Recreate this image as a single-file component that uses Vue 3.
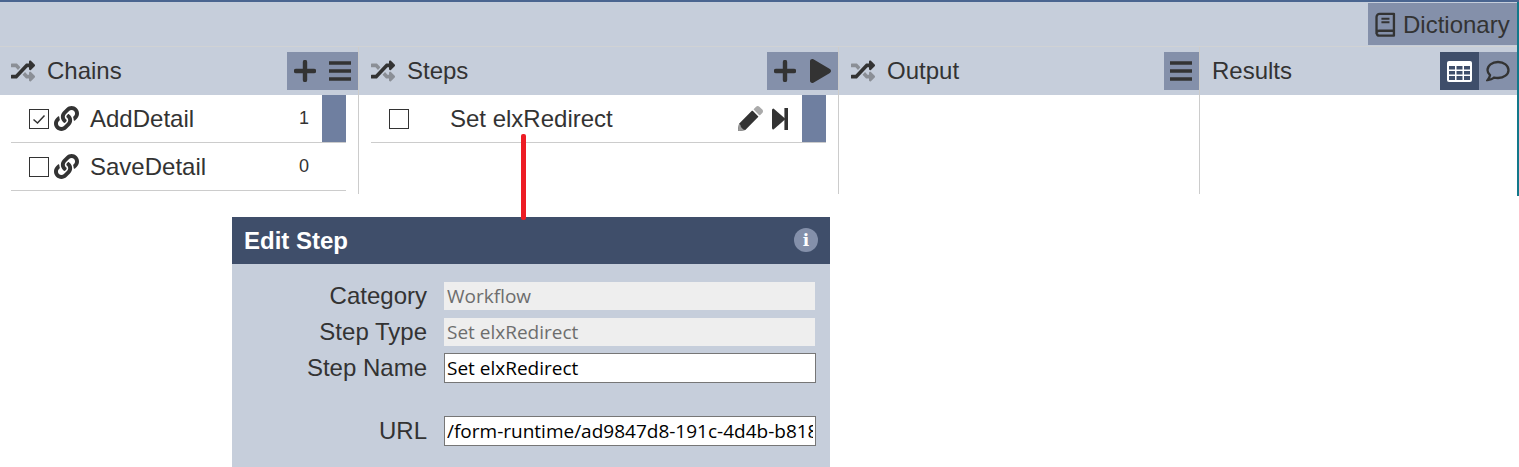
<script setup>
const shuffleGrey = 'M504.971 359.029c9.373 9.373 9.373 24.569 0 33.941l-80 79.984c-15.010 15.010-40.971 4.490-40.971-16.971V416h-58.785a12.004 12.004 0 0 1-8.773-3.812l-70.556-75.596 53.333-57.143L352 336h32v-39.981c0-21.438 25.943-31.998 40.971-16.971l80 79.981zM12 176h84l52.781 56.551 53.333-57.143-70.556-75.596A11.999 11.999 0 0 0 122.785 96H12c-6.627 0-12 5.373-12 12v56c0 6.627 5.373 12 12 12z'
const shuffleDark = 'M384 176v39.984c0 21.460 25.961 31.980 40.971 16.971l80-79.984c9.373-9.373 9.373-24.569 0-33.941l-80-79.981C409.943 24.021 384 34.582 384 56.019V96h-58.785a12.004 12.004 0 0 0-8.773 3.812L96 336H12c-6.627 0-12 5.373-12 12v56c0 6.627 5.373 12 12 12h110.785c3.326 0 6.503-1.381 8.773-3.812L352 176h32z'
const linkPath = 'M326.612 185.391c59.747 59.809 58.927 155.698.360 214.590-.110.120-.240.250-.360.370l-67.200 67.200c-59.270 59.270-155.699 59.262-214.960 0-59.270-59.260-59.270-155.700 0-214.960l37.106-37.106c9.840-9.840 26.786-3.300 27.294 10.606.648 17.722 3.826 35.527 9.690 52.721 1.986 5.822.567 12.262-3.783 16.612l-13.087 13.087c-28.026 28.026-28.905 73.660-1.155 101.960 28.024 28.579 74.086 28.749 102.325.510l67.200-67.190c28.191-28.191 28.073-73.757 0-101.830-3.701-3.694-7.429-6.564-10.341-8.569a16.037 16.037 0 0 1-6.947-12.606c-.396-10.567 3.348-21.456 11.698-29.806l21.054-21.055c5.521-5.521 14.182-6.199 20.584-1.731a152.482 152.482 0 0 1 20.522 17.197zM467.547 44.449c-59.261-59.262-155.690-59.270-214.960 0l-67.200 67.200c-.120.120-.250.250-.360.370-58.566 58.892-59.387 154.781.360 214.590a152.454 152.454 0 0 0 20.521 17.196c6.402 4.468 15.064 3.789 20.584-1.731l21.054-21.055c8.350-8.350 12.094-19.239 11.698-29.806a16.037 16.037 0 0 0-6.947-12.606c-2.912-2.005-6.640-4.875-10.341-8.569-28.073-28.073-28.191-73.639 0-101.830l67.200-67.190c28.239-28.239 74.300-28.069 102.325.510 27.750 28.300 26.872 73.934-1.155 101.960l-13.087 13.087c-4.350 4.350-5.769 10.790-3.783 16.612 5.864 17.194 9.042 34.999 9.690 52.721.509 13.906 17.454 20.446 27.294 10.606l37.106-37.106c59.271-59.259 59.271-155.699.001-214.959z'
const chains = [
  { name: 'AddDetail', count: 1, checked: true },
  { name: 'SaveDetail', count: 0, checked: false },
]
const fields = [
  { label: 'Category', value: 'Workflow', disabled: true },
  { label: 'Step Type', value: 'Set elxRedirect', disabled: true },
  { label: 'Step Name', value: 'Set elxRedirect', disabled: false },
  { label: 'URL', value: '/form-runtime/ad9847d8-191c-4d4b-b818-4f2a6c0e1d37', disabled: false, gap: true },
]
</script>

<template>
  <div class="page">
    <div class="edge"></div>
    <div class="toolbar">
      <button class="dict">
        <svg viewBox="0 0 24 28" width="22" height="25">
          <path d="M6 2h16v19H5.500a3 3 0 0 0-3 3V5.500A3.500 3.500 0 0 1 6 2z" fill="none" stroke="#333" stroke-width="2.600" stroke-linejoin="round"/>
          <path d="M3 24a2.500 2.500 0 0 0 2.500 2.500H22V21" fill="none" stroke="#333" stroke-width="2.600" stroke-linejoin="round"/>
          <path d="M8 7.500h9M8 11.500h9" stroke="#333" stroke-width="2.400"/>
        </svg>
        <span>Dictionary</span>
      </button>
    </div>

    <div class="panes">
      <section class="pane chains">
        <header class="head">
          <svg viewBox="0 0 512 512" width="24" height="24"><path :d="shuffleGrey" fill="#8b8f96"/><path :d="shuffleDark" fill="#333"/></svg>
          <h2>Chains</h2>
          <div class="btns">
            <span class="ico"><svg viewBox="0 0 22 22" width="22" height="22"><path d="M11 2v18M2 11h18" stroke="#333" stroke-width="4.400" stroke-linecap="round"/></svg></span>
            <span class="ico"><svg viewBox="0 0 22 22" width="22" height="22"><path d="M0 3h22M0 11h22M0 19h22" stroke="#333" stroke-width="3.400"/></svg></span>
          </div>
        </header>
        <div class="list">
          <div v-for="c in chains" :key="c.name" class="row">
            <span class="check"><svg v-if="c.checked" viewBox="0 0 18 18" width="18" height="18"><path d="M3.500 9.500l4 3.500 7-7.500" fill="none" stroke="#333" stroke-width="1.500"/></svg></span>
            <svg class="link" viewBox="0 0 512 512" width="25" height="25"><path :d="linkPath" fill="#333"/></svg>
            <span class="name">{{ c.name }}</span>
            <span class="count" :class="{ tight: c.checked }">{{ c.count }}</span>
            <span v-if="c.checked" class="handle"></span>
          </div>
        </div>
      </section>

      <section class="pane steps">
        <header class="head">
          <svg viewBox="0 0 512 512" width="24" height="24"><path :d="shuffleGrey" fill="#8b8f96"/><path :d="shuffleDark" fill="#333"/></svg>
          <h2>Steps</h2>
          <div class="btns">
            <span class="ico"><svg viewBox="0 0 22 22" width="22" height="22"><path d="M11 2v18M2 11h18" stroke="#333" stroke-width="4.400" stroke-linecap="round"/></svg></span>
            <span class="ico"><svg viewBox="0 0 448 512" width="21" height="24"><path d="M424.400 214.700L72.400 6.600C43.800-10.300 0 6.100 0 47.900V464c0 37.500 40.700 60.100 72.400 41.300l352-208c31.400-18.500 31.500-64.100 0-82.600z" fill="#333"/></svg></span>
          </div>
        </header>
        <div class="list">
          <div class="row">
            <span class="check"></span>
            <span class="name step-name">Set elxRedirect</span>
            <svg class="pencil" viewBox="0 0 512 512" width="25" height="25">
              <path d="M497.900 142.100l-46.100 46.100c-4.700 4.700-12.300 4.700-17 0l-111-111c-4.700-4.700-4.700-12.300 0-17l46.100-46.100c18.700-18.700 49.100-18.700 67.900 0l60.100 60.100c18.800 18.700 18.800 49.100 0 67.900z" fill="#aaa"/>
              <path d="M284.200 99.800L21.600 362.400.4 483.900c-2.900 16.400 11.400 30.600 27.800 27.800l121.500-21.300 262.600-262.600c4.700-4.700 4.700-12.300 0-17l-111-111c-4.800-4.700-12.400-4.700-17.100 0z" fill="#333"/>
              <path d="M21.600 362.400L.4 483.900c-2.900 16.400 11.400 30.600 27.800 27.800l121.500-21.300-40-10-50-50-10-40z" fill="#999"/>
            </svg>
            <svg class="next" viewBox="0 0 16 22" width="16" height="22">
              <path d="M1.500 0.500a1.500 1.500 0 0 0-1.500 1.500v18a1.500 1.500 0 0 0 1.500 1.500L13 11.500v-1z" fill="#333"/>
              <path d="M14.200 0v22" stroke="#333" stroke-width="3.600"/>
            </svg>
            <span class="handle"></span>
          </div>
        </div>
      </section>

      <section class="pane output">
        <header class="head">
          <svg viewBox="0 0 512 512" width="24" height="24"><path :d="shuffleGrey" fill="#8b8f96"/><path :d="shuffleDark" fill="#333"/></svg>
          <h2>Output</h2>
          <div class="btns">
            <span class="ico"><svg viewBox="0 0 22 22" width="22" height="22"><path d="M0 3h22M0 11h22M0 19h22" stroke="#333" stroke-width="3.400"/></svg></span>
          </div>
        </header>
      </section>

      <section class="pane results">
        <header class="head">
          <h2>Results</h2>
          <div class="btns">
            <span class="ico active"><svg viewBox="0 0 25 21" width="25" height="21"><rect width="25" height="21" rx="2" fill="#fff"/><path d="M2 5h6v3.500H2zM9.500 5h6v3.500h-6zM17 5h6v3.500h-6zM2 10h6v3.500H2zM9.500 10h6v3.500h-6zM17 10h6v3.500h-6zM2 15h6v4H2zM9.500 15h6v4h-6zM17 15h6v4h-6z" fill="#3f4e6a"/></svg></span>
            <span class="ico"><svg viewBox="0 0 24 22" width="24" height="22"><path d="M12 2C6 2 1.500 5.500 1.500 10c0 2 1 3.800 2.500 5.200-.3 1.800-1.200 3.400-2.300 4.800 2.500-.2 4.700-1 6.400-2.400 1.200.3 2.600.4 3.900.4 6 0 10.500-3.500 10.500-8S18 2 12 2z" fill="none" stroke="#333" stroke-width="2.300"/></svg></span>
          </div>
        </header>
      </section>
    </div>

    <div class="connector"></div>

    <div class="dialog">
      <div class="dialog-head">
        <h3>Edit Step</h3>
        <span class="info">i</span>
      </div>
      <div class="form">
        <label v-for="f in fields" :key="f.label" class="field" :class="{ gap: f.gap }">
          <span class="label">{{ f.label }}</span>
          <input :value="f.value" :disabled="f.disabled" :class="{ off: f.disabled }" />
        </label>
      </div>
    </div>
  </div>
</template>

<style scoped>
.page {
  width: 1519px;
  height: 467px;
  overflow: hidden;
  position: relative;
  box-sizing: border-box;
  border-top: 2px solid #4a6590;
  font-family: "Liberation Sans", Arial, sans-serif;
  color: #333;
  background: #fff;
}
.edge {
  position: absolute;
  top: -2px;
  right: 0;
  width: 2px;
  height: 196px;
  background: #12788a;
}
.toolbar {
  height: 44px;
  margin-right: 2px;
  background: #c6cedb;
  border-bottom: 1px solid #d0d2d4;
  display: flex;
  justify-content: flex-end;
  align-items: flex-end;
}
.dict {
  width: 149px;
  height: 42px;
  margin: 0 0 1px;
  padding: 2px 0 0 6px;
  border: 0;
  background: #8490aa;
  color: #333;
  font: 24px "Liberation Sans", Arial, sans-serif;
  display: flex;
  align-items: center;
  gap: 7px;
  white-space: nowrap;
}
.dict svg { margin-top: -2px; flex: none; }
.panes {
  display: flex;
  height: 147px;
  margin-right: 2px;
}
.pane {
  display: flex;
  flex-direction: column;
  box-sizing: border-box;
  border-right: 1px solid #ccc;
}
.chains { width: 359px; }
.steps { width: 480px; }
.output { width: 361px; }
.results { flex: 1; border-right: 0; }
.head {
  height: 48px;
  flex: none;
  box-sizing: border-box;
  background: #c6cedb;
  display: flex;
  align-items: center;
  padding: 0 0 0 11px;
}
.steps .head, .output .head { padding-left: 12px; }
.head h2 {
  margin: 0 0 0 12px;
  font-size: 24px;
  font-weight: 400;
  line-height: 48px;
}
.results .head h2 { margin-left: 1px; }
.btns {
  margin-left: auto;
  display: flex;
  height: 38px;
  background: #8490aa;
}
.ico {
  width: 35.500px;
  height: 38px;
  display: flex;
  align-items: center;
  justify-content: center;
}
.results .ico { width: 38.500px; }
.ico.active { background: #3f4e6a; }
.list { padding: 0 12px 0 11px; }
.row {
  height: 47px;
  border-bottom: 1px solid #ccc;
  display: flex;
  align-items: center;
  padding-left: 18px;
}
.steps .list { padding-left: 12px; }
.check {
  width: 18px;
  height: 18px;
  border: 1px solid #333;
  flex: none;
  display: block;
  margin-top: 1px;
}
.check svg { display: block; }
.link { margin-left: 5px; flex: none; }
.name {
  margin-left: 11px;
  font-size: 24px;
}
.step-name { margin-left: 41px; }
.count {
  margin-left: auto;
  margin-right: 37px;
  width: 10px;
  font-size: 18px;
  text-align: center;
}
.count.tight { margin-right: 13px; }
.handle {
  width: 24px;
  align-self: stretch;
  background: #6f7fa0;
  flex: none;
}
.pencil { margin-left: auto; flex: none; }
.next { margin: 0 14px 0 9px; flex: none; }
.connector {
  position: absolute;
  left: 521px;
  top: 132px;
  width: 5px;
  height: 86px;
  border-radius: 2px;
  background: #ed1c24;
  z-index: 2;
}
.dialog {
  position: absolute;
  left: 232px;
  top: 215px;
  width: 598px;
  height: 260px;
  background: #c6cedb;
}
.dialog-head {
  height: 47px;
  background: #3f4e6a;
  color: #fff;
  display: flex;
  align-items: center;
  justify-content: space-between;
  padding: 0 12px;
}
.dialog-head h3 {
  margin: 0;
  font-size: 24px;
  font-weight: 700;
}
.info {
  width: 24px;
  height: 24px;
  margin-top: -2px;
  border-radius: 50%;
  background: #8490aa;
  color: #fff;
  font: 700 17px/24px "DejaVu Serif", serif;
  text-align: center;
}
.form { padding-top: 14px; }
.field {
  height: 36px;
  display: flex;
  align-items: center;
}
.field.gap { margin-top: 27px; }
.label {
  width: 195px;
  text-align: right;
  font-size: 24px;
  margin-right: 17px;
}
input {
  width: 372px;
  height: 30px;
  box-sizing: border-box;
  border: 1px solid #767676;
  border-radius: 0;
  background: #fff;
  color: #000;
  padding: 0 2px;
  font: 19px "Open Sans", "Noto Sans", sans-serif;
  outline: none;
}
input.off {
  width: 371px;
  height: 28px;
  border: 0;
  background: #eee;
  color: #6d6d6d;
  padding: 0 3px;
}
</style>
